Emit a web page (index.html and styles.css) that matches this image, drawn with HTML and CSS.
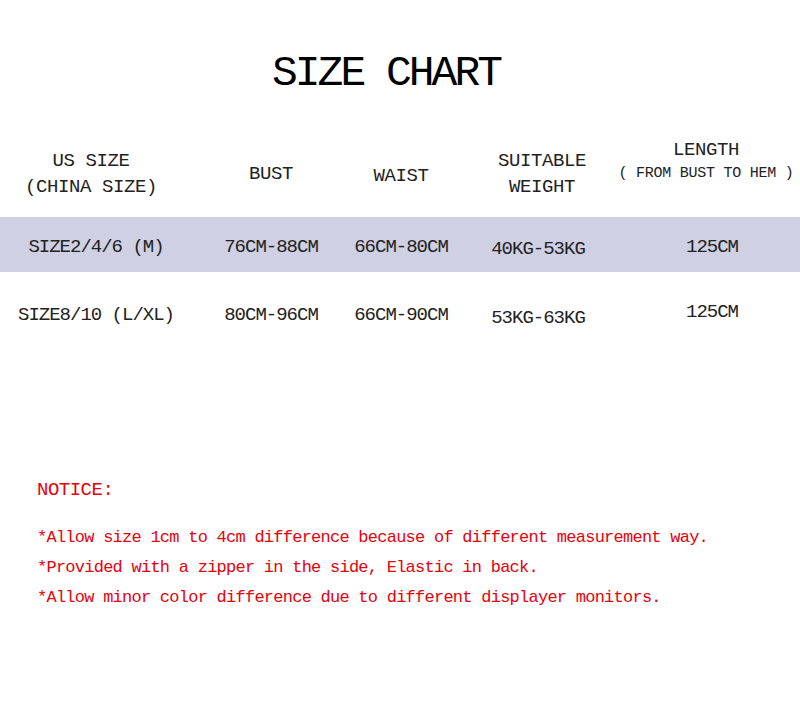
FILE: index.html
```html
<!DOCTYPE html>
<html lang="en">
<head>
<meta charset="utf-8">
<title>Size Chart</title>
<link rel="stylesheet" href="styles.css">
</head>
<body>
<div class="page">
  <h1 class="title">SIZE CHART</h1>
  <div class="chart">
    <div class="row head">
      <div class="cell c1"><span>US SIZE</span><span>(CHINA SIZE)</span></div>
      <div class="cell">BUST</div>
      <div class="cell waist">WAIST</div>
      <div class="cell c4"><span>SUITABLE</span><span>WEIGHT</span></div>
      <div class="cell len"><span>LENGTH</span><span class="small">( FROM BUST TO HEM )</span></div>
    </div>
    <div class="row data shaded">
      <div class="cell">SIZE2/4/6 (M)</div>
      <div class="cell">76CM-88CM</div>
      <div class="cell">66CM-80CM</div>
      <div class="cell low">40KG-53KG</div>
      <div class="cell">125CM</div>
    </div>
    <div class="row data second">
      <div class="cell">SIZE8/10 (L/XL)</div>
      <div class="cell">80CM-96CM</div>
      <div class="cell">66CM-90CM</div>
      <div class="cell low">53KG-63KG</div>
      <div class="cell up">125CM</div>
    </div>
  </div>
  <div class="notice">
    <p class="notice-title">NOTICE:</p>
    <ul class="notice-list">
      <li>*Allow size 1cm to 4cm difference because of different measurement way.</li>
      <li>*Provided with a zipper in the side, Elastic in back.</li>
      <li>*Allow minor color difference due to different displayer monitors.</li>
    </ul>
  </div>
</div>
</body>
</html>
```

FILE: styles.css
```css
html, body {
  margin: 0;
  padding: 0;
  background: #ffffff;
}

.page {
  box-sizing: border-box;
  width: 800px;
  height: 721px;
  padding-top: 49px;
  overflow: hidden;
  font-family: "Liberation Mono", "DejaVu Sans Mono", monospace;
  color: #222222;
}

.title {
  margin: 0;
  padding-right: 28px;
  height: 50px;
  line-height: 50px;
  font-size: 43px;
  font-weight: normal;
  letter-spacing: -3px;
  text-align: center;
  color: #000000;
}

.chart {
  margin-top: 31px;
}

.row {
  display: grid;
  grid-template-columns: 192px 158px 102px 172px 176px;
  align-items: center;
}

.cell {
  display: flex;
  flex-direction: column;
  align-items: center;
  text-align: center;
  white-space: nowrap;
  font-size: 19px;
  letter-spacing: -0.6px;
  line-height: 26px;
}

.head {
  height: 87px;
}

.head .cell {
  letter-spacing: -0.4px;
}

.head .c1 {
  margin-right: 10px;
}

.head .c4 {
  margin-left: 8px;
}

.head .waist {
  margin-top: 4px;
}

.head .len {
  margin-bottom: 24px;
  line-height: 23px;
  margin-left: -12px;
}

.head .small {
  font-size: 15px;
  letter-spacing: -0.25px;
}

.shaded {
  height: 55px;
  background: #cfd0e3;
}

.data .cell {
  font-size: 19px;
  letter-spacing: -1px;
}

.shaded .cell {
  margin-top: 5px;
}

.shaded .low {
  margin-top: 9px;
}

.second {
  height: 86px;
}

.second .low {
  margin-top: 5px;
}

.second .up {
  margin-top: -6px;
}

.notice {
  margin-top: 120px;
  padding-left: 37px;
  color: #e8000b;
}

.notice-title {
  margin: 0;
  height: 24px;
  line-height: 24px;
  font-size: 19px;
  letter-spacing: -0.5px;
}

.notice-list {
  list-style: none;
  margin: 21px 0 0;
  padding: 0;
}

.notice-list li {
  height: 30px;
  line-height: 30px;
  font-size: 17px;
  letter-spacing: -0.75px;
  white-space: nowrap;
}
```
